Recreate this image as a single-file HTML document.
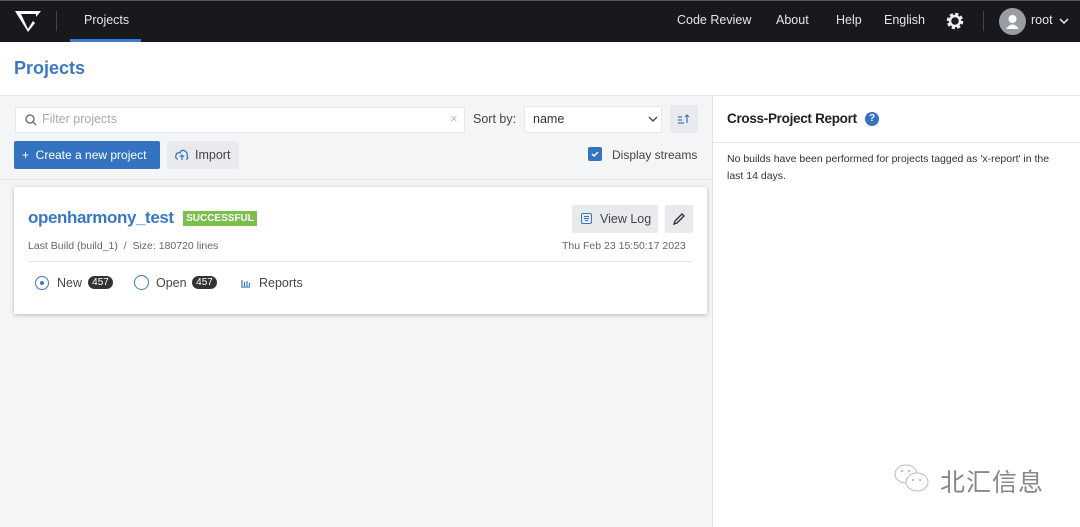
<!DOCTYPE html>
<html><head><meta charset="utf-8"><style>
*{box-sizing:border-box;margin:0;padding:0}
body{width:1080px;height:527px;overflow:hidden;font-family:"Liberation Sans",sans-serif;background:#fff;position:relative;color:#333}
.abs{position:absolute;white-space:nowrap}
.hdr{left:0;top:0;width:1080px;height:42px;background:#17191c;border-top:1px solid #555}
.nav{color:#e6e6e6;font-size:12.5px;top:13px}
.left{left:0;top:95px;width:712px;height:432px;background:#f4f5f6;border-top:1px solid #e6e6e6}
.right{left:712px;top:95px;width:368px;height:432px;background:#fff;border-left:1px solid #e2e2e2;border-top:1px solid #e6e6e6}
.btn{background:#e8eaed;border-radius:2px}
</style></head><body>
<div class="abs hdr"></div>
<svg class="abs" style="left:14px;top:9px" width="28" height="24" viewBox="0 0 28 24"><path d="M1 2 H27 L22 8 V5 H7 L14 20 L19 12 L21 14 L14 23 Z" fill="#fff"/></svg>
<div class="abs" style="left:56px;top:11px;width:1px;height:20px;background:#444"></div>
<div class="abs nav" style="left:84px">Projects</div>
<div class="abs" style="left:70px;top:39px;width:71px;height:3px;background:#3a7bd5"></div>
<div class="abs nav" style="left:677px">Code Review</div>
<div class="abs nav" style="left:776px">About</div>
<div class="abs nav" style="left:836px">Help</div>
<div class="abs nav" style="left:884px">English</div>
<svg class="abs" style="left:945px;top:11px" width="20" height="20" viewBox="0 0 20 20"><circle cx="10" cy="10" r="6.5" fill="none" stroke="#eee" stroke-width="3.5" stroke-dasharray="3 2.1"/><circle cx="10" cy="10" r="5" fill="none" stroke="#eee" stroke-width="2.5"/></svg>
<div class="abs" style="left:983px;top:11px;width:1px;height:20px;background:#444"></div>
<div class="abs" style="left:999px;top:8px;width:27px;height:27px;border-radius:50%;background:#9a9ca3"></div>
<svg class="abs" style="left:999px;top:8px" width="27" height="27"><circle cx="13.5" cy="11" r="4" fill="#fff"/><path d="M7 21 Q13.5 12 20 21 Z" fill="#fff"/></svg>
<div class="abs nav" style="left:1031px">root</div>
<svg class="abs" style="left:1059px;top:17px" width="10" height="8"><path d="M1 2 L5 6 L9 2" stroke="#eee" stroke-width="1.5" fill="none"/></svg>
<div class="abs" style="left:14px;top:58px;font-size:18px;font-weight:bold;color:#3b78c3">Projects</div>
<div class="abs left"></div>
<div class="abs right"></div>
<div class="abs" style="left:15px;top:107px;width:450px;height:26px;background:#fff;border:1px solid #e8e8e8"></div>
<svg class="abs" style="left:24px;top:113px" width="14" height="14"><circle cx="6" cy="6" r="4" stroke="#777" stroke-width="1.5" fill="none"/><path d="M9 9 L12 12" stroke="#777" stroke-width="1.5"/></svg>
<div class="abs" style="left:42px;top:112px;font-size:12.5px;color:#aaa">Filter projects</div>
<div class="abs" style="left:450px;top:111px;font-size:13px;color:#bbb">×</div>
<div class="abs" style="left:473px;top:112px;font-size:12.5px;color:#444">Sort by:</div>
<div class="abs" style="left:524px;top:106px;width:138px;height:27px;background:#fff;border:1px solid #e8e8e8"></div>
<div class="abs" style="left:533px;top:112px;font-size:12.5px;color:#333">name</div>
<svg class="abs" style="left:648px;top:115px" width="10" height="8"><path d="M1 2 L5 6 L9 2" stroke="#444" stroke-width="1.3" fill="none"/></svg>
<div class="abs btn" style="left:670px;top:105px;width:28px;height:28px"></div>
<svg class="abs" style="left:677px;top:113px" width="14" height="12"><path d="M1 4H5M1 7H5M1 10H7M10 10V2M8 4L10 2L12 4" stroke="#3b78c3" stroke-width="1.2" fill="none"/></svg>
<div class="abs" style="left:14px;top:141px;width:146px;height:28px;background:#3473c1;border-radius:2px;color:#fff;font-size:12px;padding:7px 0 0 8px">+&nbsp; Create a new project</div>
<div class="abs btn" style="left:167px;top:141px;width:72px;height:28px;font-size:12.5px;color:#444;padding:7px 0 0 28px">Import</div>
<svg class="abs" style="left:175px;top:149px" width="14" height="12"><path d="M3 10 Q0 10 1 6 Q2 3 5 4 Q6 0 10 2 Q13 4 12 7 Q14 10 11 10" stroke="#3b78c3" stroke-width="1.3" fill="none"/><path d="M7 11 V6 M5 8 L7 6 L9 8" stroke="#3b78c3" stroke-width="1.2" fill="none"/></svg>
<div class="abs" style="left:588px;top:147px;width:14px;height:14px;background:#3473c1;border-radius:2px"></div>
<svg class="abs" style="left:588px;top:147px" width="14" height="14"><path d="M4 7 L6 9 L10 5" stroke="#fff" stroke-width="1.5" fill="none"/></svg>
<div class="abs" style="left:612px;top:148px;font-size:12px;color:#444">Display streams</div>
<div class="abs" style="left:0;top:179px;width:712px;height:1px;background:#e6e6e6"></div>
<div class="abs" style="left:14px;top:187px;width:693px;height:127px;background:#fff;box-shadow:0 1px 4px rgba(0,0,0,.25)"></div>
<div class="abs" style="left:28px;top:208px;font-size:17px;font-weight:bold;color:#3b78c3;letter-spacing:-0.4px">openharmony_test</div>
<div class="abs" style="left:183px;top:211px;width:74px;height:15px;background:#7cc04b;color:#fff;font-size:10px;font-weight:bold;text-align:center;line-height:15px">SUCCESSFUL</div>
<div class="abs" style="left:28px;top:240px;font-size:10.5px;color:#666">Last Build (build_1) &nbsp;/ &nbsp;Size: 180720 lines</div>
<div class="abs btn" style="left:572px;top:205px;width:86px;height:28px;font-size:12.5px;color:#444;padding:7px 0 0 28px">View Log</div>
<svg class="abs" style="left:580px;top:212px" width="13" height="13"><rect x="1.5" y="1.5" width="10" height="10" rx="1.5" stroke="#3b78c3" fill="none"/><path d="M4 4.5H9M4 6.5H9M5 8.5H8" stroke="#3b78c3"/></svg>
<div class="abs btn" style="left:665px;top:205px;width:28px;height:28px"></div>
<svg class="abs" style="left:672px;top:212px" width="14" height="14"><path d="M2 12 L3 9 L10 2 L12 4 L5 11 Z" stroke="#333" stroke-width="1.4" fill="none"/></svg>
<div class="abs" style="left:562px;top:240px;font-size:10.5px;color:#666">Thu Feb 23 15:50:17 2023</div>
<div class="abs" style="left:28px;top:261px;width:665px;height:1px;background:#e6e6e6"></div>
<div class="abs" style="left:35px;top:276px;width:14px;height:14px;border:1.5px solid #3b78c3;border-radius:50%"></div>
<div class="abs" style="left:40px;top:281px;width:4px;height:4px;background:#3b78c3;border-radius:50%"></div>
<div class="abs" style="left:57px;top:276px;font-size:12.5px;color:#444">New</div>
<div class="abs" style="left:88px;top:276px;width:25px;height:13px;background:#333;border-radius:7px;color:#fff;font-size:10px;text-align:center;line-height:13px">457</div>
<div class="abs" style="left:134px;top:275px;width:15px;height:15px;border:1.5px solid #3b78c3;border-radius:50%"></div>
<div class="abs" style="left:156px;top:276px;font-size:12.5px;color:#444">Open</div>
<div class="abs" style="left:192px;top:276px;width:25px;height:13px;background:#333;border-radius:7px;color:#fff;font-size:10px;text-align:center;line-height:13px">457</div>
<svg class="abs" style="left:240px;top:277px" width="11" height="11"><path d="M1 10H10M2 3V9M4.5 5V9M7 4V9M9.5 6V9" stroke="#3b78c3" stroke-width="1.2"/></svg>
<div class="abs" style="left:259px;top:276px;font-size:12.5px;color:#444">Reports</div>
<div class="abs" style="left:727px;top:111px;font-size:13.5px;font-weight:bold;color:#222;letter-spacing:-0.3px">Cross-Project Report</div>
<div class="abs" style="left:865px;top:112px;width:14px;height:14px;border-radius:50%;background:#3473c1;color:#fff;font-size:10px;font-weight:bold;text-align:center;line-height:14px">?</div>
<div class="abs" style="left:713px;top:142px;width:367px;height:1px;background:#e6e6e6"></div>
<div class="abs" style="left:727px;top:151px;width:340px;font-size:10.5px;line-height:17px;color:#333;white-space:normal">No builds have been performed for projects tagged as 'x-report' in the last 14 days.</div>
<svg class="abs" style="left:892px;top:462px" width="42" height="34"><ellipse cx="14" cy="12" rx="11" ry="9" fill="#fff" stroke="#bbb"/><ellipse cx="25" cy="20" rx="11" ry="9" fill="#fff" stroke="#bbb"/><circle cx="10" cy="9" r="1" fill="#aaa"/><circle cx="17" cy="9" r="1" fill="#aaa"/><circle cx="21" cy="18" r="1" fill="#aaa"/><circle cx="28" cy="18" r="1" fill="#aaa"/></svg>
<div class="abs" style="left:940px;top:463px;font-size:25px;color:#888;font-family:'Liberation Sans','Noto Sans CJK SC',sans-serif;letter-spacing:1px">北汇信息</div>
</body></html>
